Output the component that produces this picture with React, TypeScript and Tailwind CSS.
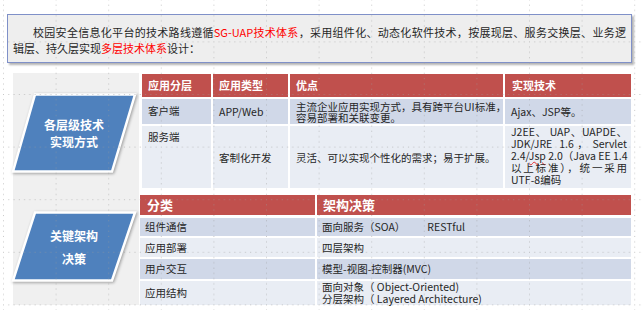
import React from "react";

const FONT = { fontFamily: "'Noto Sans CJK SC', 'Noto Sans', sans-serif" };

function Shape({ h, lines, lh }: { h: number; lines: string[]; lh: string }) {
  const pts = `22,1.5 122,1.5 99,${h - 1.5} 0,${h - 1.5}`;
  return (
    <div className="relative w-[122px]" style={{ height: h }}>
      <svg
        className="absolute inset-0 overflow-visible"
        width="122"
        height={h}
        style={{ filter: "drop-shadow(1px 1px 1.5px rgba(0,0,0,0.35))" }}
      >
        <polygon points={pts} fill="#4f81bd" stroke="#ffffff" strokeWidth="2.5" strokeLinejoin="miter" />
      </svg>
      <div className={`relative flex h-full flex-col items-center justify-center text-[12px] font-bold text-white ${lh}`}>
        {lines.map((l) => (
          <span key={l}>{l}</span>
        ))}
      </div>
    </div>
  );
}

export default function App() {
  return (
    <div className="relative h-[310px] w-[643px] overflow-hidden bg-white text-[#262626]" style={FONT}>
      <div className="pt-[14px] pl-[7px]">
        <div className="h-[49px] w-[625px] border border-[#7f90c8] bg-[#eeeeee] px-[5px] pt-[9px] text-[11px] leading-[16px] shadow-[2px_2px_2px_rgba(0,0,0,0.3)]">
          <div className="whitespace-nowrap pl-[20px] text-justify [text-align-last:justify]">
            校园安全信息化平台的技术路线遵循<span className="text-[#ff0000]">SG-UAP技术体系</span>，采用组件化、动态化软件技术，按展现层、服务交换层、业务逻
          </div>
          <div>
            辑层、持久层实现<span className="text-[#ff0000]">多层技术体系</span>设计：
          </div>
        </div>
      </div>

      <div className="mt-[10px] flex">
        <div className="ml-[13px] flex h-[232px] w-[126px] flex-col gap-[38px] bg-[#f0f0f0] pt-[20px]">
          <Shape h={80} lines={["各层级技术", "实现方式"]} lh="leading-[17px]" />
          <Shape h={71} lines={["关键架构", "决策"]} lh="leading-[23px]" />
        </div>

        <div className="ml-[1px] flex w-[491px] flex-col">
          <div className="ml-[2px] mt-[1px] grid w-[489px] grid-cols-[69px_75px_213px_126px] grid-rows-[23px_25px_62px] gap-[2px] bg-white text-[10.5px]">
            {["应用分层", "应用类型", "优点", "实现技术"].map((t, i) => (
              <div
                key={t}
                className={`flex items-center bg-[#c0504d] text-[11px] font-bold text-white ${i === 3 ? "pl-[7px]" : "pl-[6px]"}`}
              >
                {t}
              </div>
            ))}
            <div className="bg-[#d0d8e8] pl-[6px] pt-[5px] leading-[14px]">客户端</div>
            <div className="flex items-center bg-[#d0d8e8] pl-[6px]">APP/Web</div>
            <div className="flex flex-col justify-center whitespace-nowrap bg-[#d0d8e8] pl-[6px] leading-[11px]">
              <span>主流企业应用实现方式，具有跨平台UI标准，</span>
              <span>容易部署和关联变更。</span>
            </div>
            <div className="flex items-center bg-[#d0d8e8] pl-[6px]">Ajax、JSP等。</div>

            <div className="bg-[#e9edf4] pl-[6px] pt-[4px] leading-[14px]">服务端</div>
            <div className="flex items-center bg-[#e9edf4] pl-[6px] pt-[2px]">客制化开发</div>
            <div className="flex items-center whitespace-nowrap bg-[#e9edf4] pl-[6px] pt-[2px]">
              灵活、可以实现个性化的需求；易于扩展。
            </div>
            <div className="flex flex-col whitespace-nowrap bg-[#e9edf4] pl-[6px] pr-[4px] leading-[12px]">
              <span className="[text-align-last:justify]">J2EE、 UAP、UAPDE、</span>
              <span className="[text-align-last:justify]">JDK/JRE&nbsp;&nbsp;1.6&nbsp;， Servlet</span>
              <span className="[text-align-last:justify]">
                2.4/<span className="underline decoration-[#e03030] decoration-wavy decoration-[1px]">Jsp</span> 2.0（Java EE 1.4
              </span>
              <span className="[text-align-last:justify]">以上标准），统一采用</span>
              <span>UTF-8编码</span>
            </div>
          </div>

          <div className="mt-[7px] grid w-[491px] grid-cols-[175px_314px] grid-rows-[20px_19px_19px_20px_24px] gap-x-[2px] gap-y-[2px] bg-white text-[10.5px]">
            <div className="flex items-center bg-[#c0504d] pl-[7px] text-[13px] font-bold text-white">分类</div>
            <div className="flex items-center bg-[#c0504d] pl-[6px] text-[13px] font-bold text-white">架构决策</div>

            <div className="mt-[1px] flex items-center bg-[#d0d8e8] pl-[5px]">组件通信</div>
            <div className="mt-[1px] flex items-center bg-[#d0d8e8] pl-[5px]">
              面向服务（SOA）<span className="ml-[22px]">RESTful</span>
            </div>

            <div className="flex items-center bg-[#e9edf4] pl-[5px]">应用部署</div>
            <div className="flex items-center bg-[#e9edf4] pl-[5px]">四层架构</div>

            <div className="flex items-center bg-[#d0d8e8] pl-[5px]">用户交互</div>
            <div className="flex items-center bg-[#d0d8e8] pl-[5px]">模型-视图-控制器(MVC)</div>

            <div className="flex items-center bg-[#e9edf4] pl-[5px]">应用结构</div>
            <div className="flex flex-col justify-center whitespace-nowrap bg-[#e9edf4] pl-[5px] leading-[12px]">
              <span>面向对象（ Object-Oriented)</span>
              <span>分层架构（ Layered Architecture)</span>
            </div>
          </div>
        </div>
      </div>

      <svg className="pointer-events-none absolute inset-0" width="643" height="310">
        <defs>
          <pattern id="grid" x="3" y="-11.2" width="52.6" height="52.6" patternUnits="userSpaceOnUse">
            <line x1="0.5" y1="0" x2="0.5" y2="52.6" stroke="#9a9a9a" strokeWidth="1" strokeDasharray="1 4.26" />
            <line x1="0" y1="0.5" x2="52.6" y2="0.5" stroke="#9a9a9a" strokeWidth="1" strokeDasharray="1 4.26" />
          </pattern>
        </defs>
        <rect width="643" height="310" fill="url(#grid)" opacity="0.55" />
      </svg>
    </div>
  );
}
